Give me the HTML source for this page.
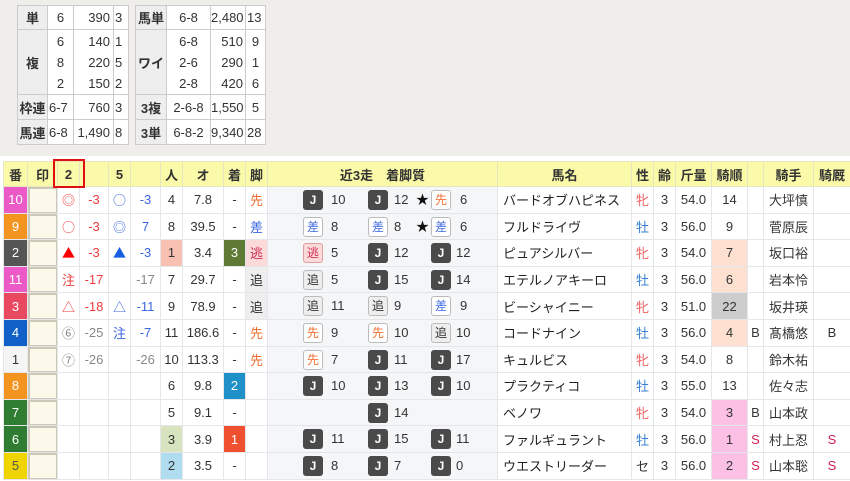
<!DOCTYPE html>
<html><head><meta charset="utf-8">
<style>
*{box-sizing:border-box;margin:0;padding:0}
body{width:850px;height:481px;overflow:hidden;background:#fff;font-family:"Liberation Sans","Noto Sans CJK JP",sans-serif;font-size:12px;color:#333;position:relative}
.top{position:absolute;left:0;top:0;width:850px;height:156px;background:#efeeea}
table{border-collapse:collapse;table-layout:fixed}
.pt{position:absolute;top:5px;background:#fff}
.pt td{border:1px solid #ccc;height:24px;padding:0 3px;font-size:13px}
.pt td.h{background:#eee;font-weight:bold;text-align:center;padding:0}
.r{text-align:right}.c{text-align:center}
.mt{position:absolute;left:3px;top:161px}
.mt td{border:1px solid #e4e6ea;height:26.6px;text-align:center;font-size:13px;padding:0;white-space:nowrap;overflow:hidden}
.mt tr.hd td{background:#fafaa8;height:25px;font-weight:bold;color:#333;border-color:#e6e6c0}
.ban{color:#fff}
.in{background:#fdf9ea;box-shadow:inset 2px 2px 0 #ccc8b8,inset -1px -1px 0 #ccc8b8}
.red{color:#f03c3c}.blu{color:#3a66e0}.gry{color:#888}
.mk{font-size:15px;font-family:"Noto Sans CJK JP",sans-serif}
.n3{background:#f5f6f8;position:relative}
.bx{position:absolute;top:3px;width:20px;height:20px;border-radius:3px;font-size:12px;line-height:20px;text-align:center}
.J{background:#4a4a4a;color:#fff;font-weight:bold}
.s{border:1px solid #bbb;background:#fff;line-height:18px}
.nm{position:absolute;top:4px;line-height:18px}
.hn{text-align:left!important;padding-left:5px!important;color:#222}
.f{color:#f06060}.m{color:#3a80d0}
</style></head><body>
<div class="top"></div>
<table class="pt" style="left:17px;width:111px">
<colgroup><col style="width:30px"><col style="width:26px"><col style="width:40px"><col style="width:15px"></colgroup>
<tr><td class="h">単</td><td class="c" style="padding:0">6</td><td class="r">390</td><td style="padding:0 1px">3</td></tr>
<tr><td class="h" style="height:65px">複</td><td class="c" style="line-height:21px;padding:0">6<br>8<br>2</td><td class="r" style="line-height:21px">140<br>220<br>150</td><td style="line-height:21px;padding:0 1px">1<br>5<br>2</td></tr>
<tr><td class="h" style="height:25px">枠連</td><td style="padding:0 1px">6-7</td><td class="r">760</td><td style="padding:0 1px">3</td></tr>
<tr><td class="h" style="height:25px">馬連</td><td style="padding:0 1px">6-8</td><td class="r">1,490</td><td style="padding:0 1px">8</td></tr>
</table>
<table class="pt" style="left:135px;width:130px">
<colgroup><col style="width:31px"><col style="width:44px"><col style="width:35px"><col style="width:20px"></colgroup>
<tr><td class="h">馬単</td><td class="c">6-8</td><td class="r" style="padding:0 2px 0 0">2,480</td><td style="padding:0 1px">13</td></tr>
<tr><td class="h" style="height:65px">ワイ</td><td class="c" style="line-height:21px">6-8<br>2-6<br>2-8</td><td class="r" style="line-height:21px;padding:0 2px 0 0">510<br>290<br>420</td><td class="c" style="line-height:21px;padding:0">9<br>1<br>6</td></tr>
<tr><td class="h" style="height:25px">3複</td><td class="c" style="padding:0">2-6-8</td><td class="r" style="padding:0 2px 0 0">1,550</td><td class="c" style="padding:0">5</td></tr>
<tr><td class="h" style="height:25px">3単</td><td class="c" style="padding:0">6-8-2</td><td class="r" style="padding:0 2px 0 0">9,340</td><td style="padding:0 1px">28</td></tr>
</table>

<table class="mt" style="width:847px">
<colgroup>
<col style="width:24px"><col style="width:30px"><col style="width:22px"><col style="width:29px"><col style="width:22px"><col style="width:30px"><col style="width:22px"><col style="width:41px"><col style="width:22px"><col style="width:22px"><col style="width:230px"><col style="width:134px"><col style="width:22px"><col style="width:22px"><col style="width:36px"><col style="width:36px"><col style="width:16px"><col style="width:50px"><col style="width:37px">
</colgroup>
<tr class="hd"><td>番</td><td>印</td><td>2</td><td></td><td>5</td><td></td><td>人</td><td>オ</td><td>着</td><td>脚</td><td>近3走　着脚質</td><td>馬名</td><td>性</td><td>齢</td><td>斤量</td><td>騎順</td><td></td><td>騎手</td><td>騎厩</td></tr>

<tr><td class="ban" style="background:#ec5ac8">10</td><td class="in"></td><td class="red mk">◎</td><td class="red">-3</td><td class="blu mk">○</td><td class="blu">-3</td><td>4</td><td>7.8</td><td>-</td><td style="color:#f07030">先</td>
<td class="n3"><span class="bx J" style="left:35px">J</span><span class="nm" style="left:63px">10</span><span class="bx J" style="left:100px">J</span><span class="nm" style="left:126px">12</span><span class="nm" style="left:148px;color:#111">★</span><span class="bx s" style="left:163px;color:#f07030">先</span><span class="nm" style="left:192px">6</span></td>
<td class="hn">バードオブハピネス</td><td class="f">牝</td><td>3</td><td>54.0</td><td>14</td><td></td><td>大坪慎</td><td></td></tr>

<tr><td class="ban" style="background:#f39420">9</td><td class="in"></td><td class="red mk">○</td><td class="red">-3</td><td class="blu mk">◎</td><td class="blu">7</td><td>8</td><td>39.5</td><td>-</td><td class="blu">差</td>
<td class="n3"><span class="bx s blu" style="left:35px">差</span><span class="nm" style="left:63px">8</span><span class="bx s blu" style="left:100px">差</span><span class="nm" style="left:126px">8</span><span class="nm" style="left:148px;color:#111">★</span><span class="bx s blu" style="left:163px">差</span><span class="nm" style="left:192px">6</span></td>
<td class="hn">フルドライヴ</td><td class="m">牡</td><td>3</td><td>56.0</td><td>9</td><td></td><td>菅原辰</td><td></td></tr>

<tr><td class="ban" style="background:#555">2</td><td class="in"></td><td class="mk" style="color:#f00">▲</td><td class="red">-3</td><td class="mk" style="color:#1a5ee0">▲</td><td class="blu">-3</td><td style="background:#f8c0b0">1</td><td>3.4</td><td class="ban" style="background:#5e7a34">3</td><td style="background:#fcdada;color:#d03050">逃</td>
<td class="n3"><span class="bx s" style="left:35px;background:#fcdada;color:#d03050;border-color:#e0a0a0">逃</span><span class="nm" style="left:63px">5</span><span class="bx J" style="left:100px">J</span><span class="nm" style="left:126px">12</span><span class="bx J" style="left:163px">J</span><span class="nm" style="left:188px">12</span></td>
<td class="hn">ピュアシルバー</td><td class="f">牝</td><td>3</td><td>54.0</td><td style="background:#fde0d0">7</td><td></td><td>坂口裕</td><td></td></tr>

<tr><td class="ban" style="background:#ec5ac8">11</td><td class="in"></td><td class="red">注</td><td class="red">-17</td><td></td><td class="gry">-17</td><td>7</td><td>29.7</td><td>-</td><td style="background:#eee">追</td>
<td class="n3"><span class="bx s" style="left:35px;background:#eee">追</span><span class="nm" style="left:63px">5</span><span class="bx J" style="left:100px">J</span><span class="nm" style="left:126px">15</span><span class="bx J" style="left:163px">J</span><span class="nm" style="left:188px">14</span></td>
<td class="hn">エテルノアキーロ</td><td class="m">牡</td><td>3</td><td>56.0</td><td style="background:#fde0d0">6</td><td></td><td>岩本怜</td><td></td></tr>

<tr><td class="ban" style="background:#e84860">3</td><td class="in"></td><td class="red mk">△</td><td class="red">-18</td><td class="blu mk">△</td><td class="blu">-11</td><td>9</td><td>78.9</td><td>-</td><td style="background:#eee">追</td>
<td class="n3"><span class="bx s" style="left:35px;background:#eee">追</span><span class="nm" style="left:63px">11</span><span class="bx s" style="left:100px;background:#eee">追</span><span class="nm" style="left:126px">9</span><span class="bx s blu" style="left:163px">差</span><span class="nm" style="left:192px">9</span></td>
<td class="hn">ビーシャイニー</td><td class="f">牝</td><td>3</td><td>51.0</td><td style="background:#ccc">22</td><td></td><td>坂井瑛</td><td></td></tr>

<tr><td class="ban" style="background:#1060c8">4</td><td class="in"></td><td class="gry mk">⑥</td><td class="gry">-25</td><td class="blu">注</td><td class="blu">-7</td><td>11</td><td>186.6</td><td>-</td><td style="color:#f07030">先</td>
<td class="n3"><span class="bx s" style="left:35px;color:#f07030">先</span><span class="nm" style="left:63px">9</span><span class="bx s" style="left:100px;color:#f07030">先</span><span class="nm" style="left:126px">10</span><span class="bx s" style="left:163px;background:#eee">追</span><span class="nm" style="left:188px">10</span></td>
<td class="hn">コードナイン</td><td class="m">牡</td><td>3</td><td>56.0</td><td style="background:#fde0d0">4</td><td>B</td><td>髙橋悠</td><td>B</td></tr>

<tr><td style="background:#f5f5f5">1</td><td class="in"></td><td class="gry mk">⑦</td><td class="gry">-26</td><td></td><td class="gry">-26</td><td>10</td><td>113.3</td><td>-</td><td style="color:#f07030">先</td>
<td class="n3"><span class="bx s" style="left:35px;color:#f07030">先</span><span class="nm" style="left:63px">7</span><span class="bx J" style="left:100px">J</span><span class="nm" style="left:126px">11</span><span class="bx J" style="left:163px">J</span><span class="nm" style="left:188px">17</span></td>
<td class="hn">キュルビス</td><td class="f">牝</td><td>3</td><td>54.0</td><td>8</td><td></td><td>鈴木祐</td><td></td></tr>

<tr><td class="ban" style="background:#f39420">8</td><td class="in"></td><td></td><td></td><td></td><td></td><td>6</td><td>9.8</td><td class="ban" style="background:#2090c8">2</td><td></td>
<td class="n3"><span class="bx J" style="left:35px">J</span><span class="nm" style="left:63px">10</span><span class="bx J" style="left:100px">J</span><span class="nm" style="left:126px">13</span><span class="bx J" style="left:163px">J</span><span class="nm" style="left:188px">10</span></td>
<td class="hn">プラクティコ</td><td class="m">牡</td><td>3</td><td>55.0</td><td>13</td><td></td><td>佐々志</td><td></td></tr>

<tr><td class="ban" style="background:#2e7d32">7</td><td class="in"></td><td></td><td></td><td></td><td></td><td>5</td><td>9.1</td><td>-</td><td></td>
<td class="n3"><span class="bx J" style="left:100px">J</span><span class="nm" style="left:126px">14</span></td>
<td class="hn">ベノワ</td><td class="f">牝</td><td>3</td><td>54.0</td><td style="background:#fcc0e4">3</td><td>B</td><td>山本政</td><td></td></tr>

<tr><td class="ban" style="background:#2e7d32">6</td><td class="in"></td><td></td><td></td><td></td><td></td><td style="background:#d8e4c0">3</td><td>3.9</td><td class="ban" style="background:#f05030">1</td><td></td>
<td class="n3"><span class="bx J" style="left:35px">J</span><span class="nm" style="left:63px">11</span><span class="bx J" style="left:100px">J</span><span class="nm" style="left:126px">15</span><span class="bx J" style="left:163px">J</span><span class="nm" style="left:188px">11</span></td>
<td class="hn">ファルギュラント</td><td class="m">牡</td><td>3</td><td>56.0</td><td style="background:#fcc0e4">1</td><td style="color:#d02050">S</td><td>村上忍</td><td style="color:#d02050">S</td></tr>

<tr><td style="background:#f0d400;color:#555">5</td><td class="in"></td><td></td><td></td><td></td><td></td><td style="background:#b0dcf0">2</td><td>3.5</td><td>-</td><td></td>
<td class="n3"><span class="bx J" style="left:35px">J</span><span class="nm" style="left:63px">8</span><span class="bx J" style="left:100px">J</span><span class="nm" style="left:126px">7</span><span class="bx J" style="left:163px">J</span><span class="nm" style="left:188px">0</span></td>
<td class="hn">ウエストリーダー</td><td>セ</td><td>3</td><td>56.0</td><td style="background:#fcc0e4">2</td><td style="color:#d02050">S</td><td>山本聡</td><td style="color:#d02050">S</td></tr>
</table>
<div style="position:absolute;left:53px;top:159px;width:32px;height:29px;border:2px solid #e01010"></div>
</body></html>
